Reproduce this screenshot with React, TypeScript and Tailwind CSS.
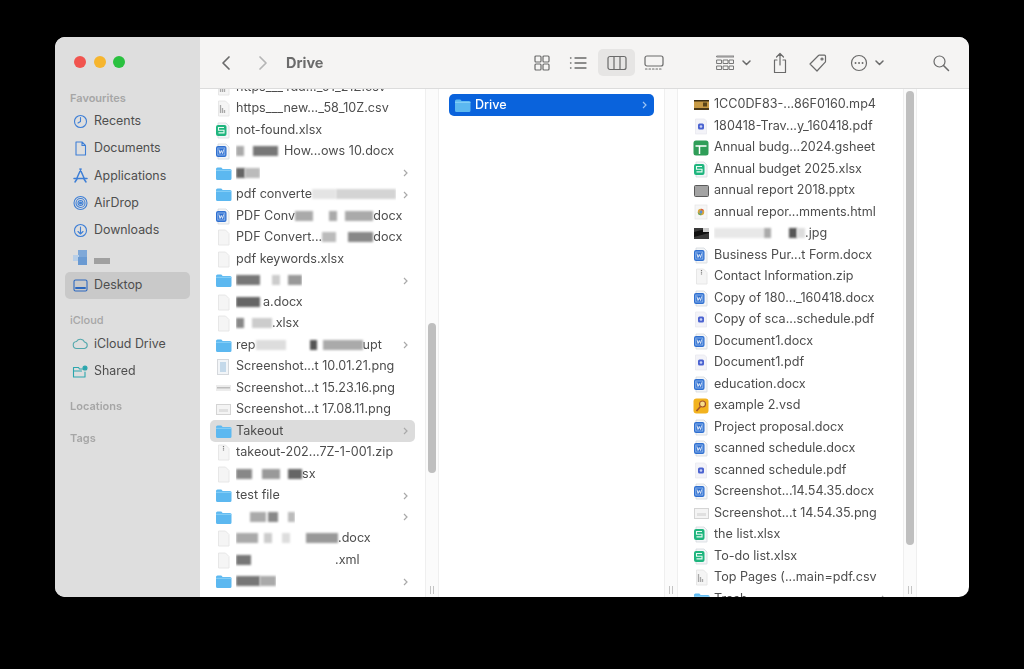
import type { ReactNode } from "react";

type IconKind =
  | "folder" | "word" | "excel" | "pdf" | "blank" | "csv" | "zip" | "gsheet" | "vsd"
  | "video" | "slides" | "html" | "photo" | "shotTall" | "shotWide" | "shotBox";

type Row = { icon: IconKind; name: ReactNode; chevron?: boolean; active?: boolean };

// redaction smudge in a file name
const B = ({ w, c = "#9a9a9a" }: { w: number; c?: string }) => (
  <span className="inline-block h-[10px] align-[-1px] blur-[1px]" style={{ width: w, background: c }} />
);
const G = ({ w }: { w: number }) => <span className="inline-block" style={{ width: w }} />;

const FileIcon = ({ kind }: { kind: IconKind }) => {
  if (kind === "folder")
    return (
      <svg width="17" height="15" viewBox="0 0 17 15">
        <path d="M1 3a1.500 1.500 0 0 1 1.500-1.500h3.800l1.400 1.400h7.300A1.500 1.500 0 0 1 16.500 4.400v8.100a1.500 1.500 0 0 1-1.500 1.500H2.500A1.500 1.500 0 0 1 1 12.500z" fill="#5cb8f0" />
        <path d="M1 4.300h15.500" stroke="#8ed2f8" strokeWidth="1" />
      </svg>
    );
  if (kind === "word")
    return (
      <svg width="16" height="17" viewBox="0 0 16 17">
        <path d="M3 1h8l3 3v11.500a.5.500 0 0 1-.5.500H3z" fill="#f4f6f8" stroke="#cfd4da" strokeWidth=".7" />
        <rect x="1" y="3" width="10.500" height="11" rx="2" fill="#2f6fd0" />
        <rect x="2.800" y="5" width="7" height="7" fill="none" stroke="#9cc0f0" strokeWidth=".8" />
        <path d="M4 6.500l1 4 1.300-3 1.300 3 1-4" fill="none" stroke="#fff" strokeWidth=".8" />
      </svg>
    );
  if (kind === "excel")
    return (
      <svg width="16" height="17" viewBox="0 0 16 17">
        <path d="M3 1h8l3 3v11.500a.5.500 0 0 1-.5.500H3z" fill="#f4f6f8" stroke="#cfd4da" strokeWidth=".7" />
        <rect x="1" y="3" width="10.500" height="11" rx="2" fill="#1fb57e" />
        <path d="M9 5.500H3.500v2.700H9v2.700H3.500" fill="none" stroke="#e8fbf3" strokeWidth="1.100" />
      </svg>
    );
  if (kind === "pdf")
    return (
      <svg width="16" height="17" viewBox="0 0 16 17">
        <path d="M2.500 1h9l2 2v13h-11z" fill="#f3f3f8" stroke="#e6e6ee" strokeWidth=".7" />
        <rect x="5" y="5.500" width="6" height="6" rx="1.500" fill="#4a62d0" />
        <circle cx="8" cy="8.500" r="1.300" fill="#c9d2f5" />
      </svg>
    );
  if (kind === "gsheet")
    return (
      <svg width="16" height="16" viewBox="0 0 16 16">
        <rect x="0.500" y="0.500" width="15" height="15" rx="2.500" fill="#2f9e58" />
        <path d="M2.500 6h11M6.500 6v8" stroke="#fff" strokeWidth="1.500" />
      </svg>
    );
  if (kind === "vsd")
    return (
      <svg width="16" height="16" viewBox="0 0 16 16">
        <rect x="0.500" y="0.500" width="15" height="15" rx="3" fill="#f2b21e" />
        <circle cx="9.500" cy="6" r="3" fill="#f7dd8a" stroke="#a0522d" strokeWidth="1.200" />
        <path d="M7.500 8.500l-4 4.500" stroke="#a0522d" strokeWidth="1.600" />
      </svg>
    );
  if (kind === "video")
    return (
      <svg width="15" height="10" viewBox="0 0 15 10">
        <rect width="15" height="10" fill="#c79a45" />
        <rect y="0" width="15" height="1.500" fill="#3a2c12" />
        <rect y="8" width="15" height="2" fill="#4a3817" />
        <rect x="9" y="2.500" width="4" height="4" fill="#5a4418" />
      </svg>
    );
  if (kind === "slides")
    return (
      <svg width="15" height="12" viewBox="0 0 15 12">
        <rect x=".5" y=".5" width="14" height="11" rx="1" fill="#a3a3a3" stroke="#5a5a5a" />
      </svg>
    );
  if (kind === "html")
    return (
      <svg width="14" height="16" viewBox="0 0 14 16">
        <rect x="1" y="1" width="12" height="14" fill="#f6f6f6" stroke="#e6e6e6" strokeWidth=".7" />
        <circle cx="7" cy="8" r="3.200" fill="#d8a53a" />
        <path d="M7 4.800a3.200 3.200 0 0 1 2.900 1.800H7z" fill="#d9534f" />
        <path d="M3.800 8a3.200 3.200 0 0 0 3.200 3.200l1-1.800H5z" fill="#5aa86a" />
        <circle cx="7" cy="8" r="1.400" fill="#5a8fd8" />
      </svg>
    );
  if (kind === "photo")
    return (
      <svg width="15" height="11" viewBox="0 0 15 11">
        <rect width="15" height="11" fill="#3a3a3a" />
        <path d="M0 4l15-4v5L0 9z" fill="#111" />
        <rect x="9" y="0" width="6" height="4" fill="#cfcfcf" />
      </svg>
    );
  if (kind === "shotTall")
    return (
      <svg width="14" height="16" viewBox="0 0 14 16">
        <rect x="1.500" y=".5" width="11" height="15" fill="#f2f5f8" stroke="#d5d8dc" />
        <rect x="4" y="3" width="6" height="10" fill="#c4d9ea" />
      </svg>
    );
  if (kind === "shotWide")
    return (
      <svg width="15" height="8" viewBox="0 0 15 8">
        <rect y="1" width="15" height="6" fill="#ececec" />
        <rect x="1" y="3" width="13" height="1.500" fill="#bdbdbd" />
      </svg>
    );
  if (kind === "shotBox")
    return (
      <svg width="15" height="11" viewBox="0 0 15 11">
        <rect x=".5" y=".5" width="14" height="10" fill="#f4f4f4" stroke="#d4d4d4" />
        <rect x="3" y="5" width="9" height="3" fill="#e0e0e0" />
      </svg>
    );
  // blank / csv / zip documents
  return (
    <svg width="13" height="17" viewBox="0 0 13 17">
      <path d="M1.500 1h7l3.500 3.500V16h-10.500z" fill="#f5f5f5" stroke="#e2e2e2" strokeWidth=".8" />
      {kind === "csv" && <path d="M3.500 5v8M5.500 8v5M7.500 10v3" stroke="#a8a8a8" strokeWidth="1.300" />}
      {kind === "zip" && <path d="M6.500 2v5" stroke="#777" strokeWidth="1.200" strokeDasharray="1 .8" />}
    </svg>
  );
};

const col1: Row[] = [
  { icon: "csv", name: "https___4dd..._01_21Z.csv" },
  { icon: "csv", name: "https___new..._58_10Z.csv" },
  { icon: "excel", name: "not-found.xlsx" },
  { icon: "word", name: <><B w={8} c="#aaa" /><G w={9} /><B w={25} c="#777" /><G w={6} />How...ows 10.docx</> },
  { icon: "folder", name: <><B w={9} c="#666" /><B w={15} c="#bbb" /></>, chevron: true },
  { icon: "folder", name: <>pdf converte<B w={24} c="#e4e4e4" /><B w={60} c="#d4d4d4" /></>, chevron: true },
  { icon: "word", name: <>PDF Conv<B w={18} c="#aaa" /><G w={16} /><B w={8} c="#aaa" /><G w={8} /><B w={28} c="#aaa" />docx</> },
  { icon: "blank", name: <>PDF Convert...<B w={14} c="#bbb" /><G w={12} /><B w={25} c="#888" />docx</> },
  { icon: "blank", name: "pdf keywords.xlsx" },
  { icon: "folder", name: <><B w={24} c="#777" /><G w={12} /><B w={8} c="#ccc" /><G w={8} /><B w={14} c="#999" /></>, chevron: true },
  { icon: "blank", name: <><B w={24} c="#666" /><G w={3} />a.docx</> },
  { icon: "blank", name: <><B w={8} c="#888" /><G w={8} /><B w={20} c="#ccc" />.xlsx</> },
  { icon: "folder", name: <>rep<B w={30} c="#ddd" /><G w={24} /><B w={7} c="#555" /><G w={6} /><B w={40} c="#aaa" />upt</>, chevron: true },
  { icon: "shotTall", name: "Screenshot...t 10.01.21.png" },
  { icon: "shotWide", name: "Screenshot...t 15.23.16.png" },
  { icon: "shotBox", name: "Screenshot...t 17.08.11.png" },
  { icon: "folder", name: "Takeout", chevron: true, active: true },
  { icon: "zip", name: "takeout-202...7Z-1-001.zip" },
  { icon: "blank", name: <><B w={16} c="#888" /><G w={10} /><B w={18} c="#999" /><G w={8} /><B w={14} c="#666" />sx</> },
  { icon: "folder", name: "test file", chevron: true },
  { icon: "folder", name: <><G w={14} /><B w={16} c="#aaa" /><G w={2} /><B w={10} c="#888" /><G w={10} /><B w={7} c="#bbb" /></>, chevron: true },
  { icon: "blank", name: <><B w={22} c="#aaa" /><G w={6} /><B w={8} c="#ccc" /><G w={10} /><B w={8} c="#ddd" /><G w={16} /><B w={32} c="#999" />.docx</> },
  { icon: "blank", name: <><B w={15} c="#777" /><G w={84} />.xml</> },
  { icon: "folder", name: <><B w={24} c="#777" /><B w={16} c="#aaa" /></>, chevron: true },
  { icon: "folder", name: "drafts", chevron: true },
];

const col3: Row[] = [
  { icon: "video", name: "1CC0DF83-...86F0160.mp4" },
  { icon: "pdf", name: "180418-Trav...y_160418.pdf" },
  { icon: "gsheet", name: "Annual budg...2024.gsheet" },
  { icon: "excel", name: "Annual budget 2025.xlsx" },
  { icon: "slides", name: "annual report 2018.pptx" },
  { icon: "html", name: "annual repor...mments.html" },
  { icon: "photo", name: <><B w={50} c="#e8e8e8" /><B w={7} c="#aaa" /><G w={18} /><B w={8} c="#555" /><B w={8} c="#ddd" />.jpg</> },
  { icon: "word", name: "Business Pur...t Form.docx" },
  { icon: "zip", name: "Contact Information.zip" },
  { icon: "word", name: "Copy of 180..._160418.docx" },
  { icon: "pdf", name: "Copy of sca...schedule.pdf" },
  { icon: "word", name: "Document1.docx" },
  { icon: "pdf", name: "Document1.pdf" },
  { icon: "word", name: "education.docx" },
  { icon: "vsd", name: "example 2.vsd" },
  { icon: "word", name: "Project proposal.docx" },
  { icon: "word", name: "scanned schedule.docx" },
  { icon: "pdf", name: "scanned schedule.pdf" },
  { icon: "word", name: "Screenshot...14.54.35.docx" },
  { icon: "shotBox", name: "Screenshot...t 14.54.35.png" },
  { icon: "excel", name: "the list.xlsx" },
  { icon: "excel", name: "To-do list.xlsx" },
  { icon: "csv", name: "Top Pages (...main=pdf.csv" },
  { icon: "folder", name: "Trash", chevron: true },
];

const Chevron = ({ color = "#a9a9a9" }: { color?: string }) => (
  <svg width="5" height="8" viewBox="0 0 5 8" fill="none" stroke={color} strokeWidth="1.200" className="ml-auto shrink-0">
    <path d="M1 1l3 3-3 3" />
  </svg>
);

const FileRow = ({ row }: { row: Row }) => (
  <div className={`flex h-[21.5px] items-center rounded-[5px] pr-[7px] ${row.active ? "bg-[#dcdcdc]" : ""}`}>
    <span className="flex w-[26px] shrink-0 justify-center">
      <FileIcon kind={row.icon} />
    </span>
    <span className="truncate">{row.name}</span>
    {row.chevron && <Chevron />}
  </div>
);

const Gutter = ({ thumbTop, thumbHeight }: { thumbTop?: string; thumbHeight?: string }) => (
  <div className="flex w-[14px] shrink-0 flex-col items-center border-x border-[#efefef] bg-[#fbfbfb]">
    {thumbTop && <div className={`w-2 rounded-full bg-[#bfbfbf] ${thumbTop} ${thumbHeight}`} />}
    <div className="mt-auto mb-[3px] flex gap-[2px]">
      <span className="h-[8px] w-px bg-[#c4c4c4]" />
      <span className="h-[8px] w-px bg-[#c4c4c4]" />
    </div>
  </div>
);

const sideItem = "flex h-[27.400px] items-center rounded-[5px] pl-[7px] text-[12.400px] text-[#4e4e4e]";

const SideIcon = ({ children, color = "#3e7fd6" }: { children: ReactNode; color?: string }) => (
  <svg width="17" height="17" viewBox="0 0 17 17" fill="none" stroke={color} strokeWidth="1.100" strokeLinecap="round" strokeLinejoin="round" className="mr-[5px] shrink-0">
    {children}
  </svg>
);

const Sidebar = () => (
  <aside className="flex w-[145px] shrink-0 flex-col bg-[#dedede] px-[10px] pt-[19px]">
    <div className="flex gap-[7.500px] pl-[9px]">
      <span className="h-[12px] w-[12px] rounded-full bg-[#f1544f]" />
      <span className="h-[12px] w-[12px] rounded-full bg-[#f6b52e]" />
      <span className="h-[12px] w-[12px] rounded-full bg-[#2ac13f]" />
    </div>
    <p className="mt-[22px] mb-[1px] pl-[5px] text-[11px] font-semibold text-[#a6a6a6]">Favourites</p>
    <div className={sideItem}>
      <SideIcon><circle cx="8.500" cy="8.500" r="6" /><path d="M8.500 4.500v4l-2.500 1.500" /></SideIcon>Recents
    </div>
    <div className={sideItem}>
      <SideIcon><path d="M4 2h6l3.500 3.500V15H4zM10 2v3.500h3.500" /></SideIcon>Documents
    </div>
    <div className={sideItem}>
      <SideIcon><path d="M9 2L4.500 12M8 2l4.500 10M2 11.500h13M3 15l2-3M14 15l-2-3" strokeWidth="1.500" /></SideIcon>Applications
    </div>
    <div className={sideItem}>
      <SideIcon><circle cx="8.500" cy="8" r="6.500" /><circle cx="8.500" cy="8" r="4.500" /><circle cx="8.500" cy="8" r="2.500" /><circle cx="8.500" cy="8" r="1" fill="#3e7fd6" /></SideIcon>AirDrop
    </div>
    <div className={sideItem}>
      <SideIcon><circle cx="8.500" cy="8.500" r="6" /><path d="M8.500 5v7M6 9.500l2.500 2.500L11 9.500" /></SideIcon>Downloads
    </div>
    <div className={sideItem}>
      <svg width="17" height="17" viewBox="0 0 17 17" className="mr-[5px] shrink-0 blur-[0.4px]">
        <rect x="6" y="0" width="9" height="8" fill="#7fa8d8" />
        <rect x="1" y="5" width="6" height="6" fill="#b8cfe8" />
        <rect x="6" y="7" width="9" height="8" fill="#6a9ad2" />
      </svg>
      <span className="mt-[5px] h-[6px] w-[16px] bg-[#a0a0a0] blur-[0.6px]" />
    </div>
    <div className={`${sideItem} bg-[#c9c9c9]`}>
      <SideIcon color="#2c68bf"><rect x="2" y="3" width="13" height="11" rx="1.500" /><path d="M4 11h9" strokeWidth="2" /></SideIcon>Desktop
    </div>
    <p className="mt-[13px] mb-[1.500px] pl-[5px] text-[11px] font-medium text-[#a6a6a6]">iCloud</p>
    <div className={sideItem}>
      <SideIcon color="#54a8ad"><path d="M5 13.500a3.500 3.500 0 0 1-.5-7A4.500 4.500 0 0 1 12.500 7a3.300 3.300 0 0 1 0 6.500z" /></SideIcon>iCloud Drive
    </div>
    <div className={sideItem}>
      <SideIcon color="#2aa6ad"><path d="M1.500 4.500h5l1 1.500h3M1.500 4.500V14h11.500V9M1.500 8h8" /><circle cx="13" cy="5" r="2" fill="#2aa6ad" /></SideIcon>Shared
    </div>
    <p className="mt-[13px] pl-[5px] text-[11px] font-semibold text-[#a6a6a6]">Locations</p>
    <p className="mt-[15px] pl-[5px] text-[11px] font-semibold text-[#a6a6a6]">Tags</p>
  </aside>
);

const ToolIcon = ({ w = 18, h = 18, children, className = "" }: { w?: number; h?: number; children: ReactNode; className?: string }) => (
  <svg width={w} height={h} viewBox={`0 0 ${w} ${h}`} fill="none" stroke="#6a6a6a" strokeWidth="1.200" strokeLinecap="round" strokeLinejoin="round" className={`shrink-0 ${className}`}>
    {children}
  </svg>
);

const MiniChevron = ({ className }: { className: string }) => (
  <ToolIcon w={9} h={6} className={className}><path d="M1 1l3.500 3.500L8 1" strokeWidth="1.500" /></ToolIcon>
);

const Toolbar = () => (
  <header className="flex h-[52px] shrink-0 items-center border-b border-[#dcdcdc] bg-[#f5f4f3] pl-[20px]">
    <ToolIcon w={12} h={18}><path d="M9 3L3 9l6 6" strokeWidth="1.700" /></ToolIcon>
    <ToolIcon w={12} h={18} className="ml-[25px]"><path d="M3 3l6 6-6 6" stroke="#b5b5b5" strokeWidth="1.700" /></ToolIcon>
    <h1 className="ml-[17px] text-[14.500px] font-bold text-[#6b6b6b]">Drive</h1>
    <div className="ml-[210px] flex items-center">
      <ToolIcon>
        <rect x="2" y="2" width="6" height="6" rx="1" /><rect x="10" y="2" width="6" height="6" rx="1" />
        <rect x="2" y="10" width="6" height="6" rx="1" /><rect x="10" y="10" width="6" height="6" rx="1" />
      </ToolIcon>
      <ToolIcon className="ml-[18px]">
        <path d="M6 4h11M6 9h11M6 14h11M1.500 4h.5M1.500 9h.5M1.500 14h.5" strokeWidth="1.300" />
      </ToolIcon>
      <div className="ml-[11px] flex h-[27px] w-[37px] items-center justify-center rounded-[5px] bg-[#e6e5e4]">
        <ToolIcon w={20} h={16}><rect x="1" y="1.500" width="18" height="13" rx="2" /><path d="M7 1.500v13M13 1.500v13" /></ToolIcon>
      </div>
      <ToolIcon w={20} h={18} className="ml-[9px]">
        <rect x="1" y="2" width="18" height="10" rx="2" /><path d="M1.500 15h17" strokeDasharray="1.500 2" />
      </ToolIcon>
    </div>
    <div className="ml-[52px] flex items-center">
      <ToolIcon w={18} h={18}>
        <rect x="1" y="2" width="17" height="1" strokeWidth=".8" />
        <rect x="1" y="6" width="4.500" height="3.500" strokeWidth=".9" /><rect x="7.500" y="6" width="4.500" height="3.500" strokeWidth=".9" /><rect x="13.500" y="6" width="4" height="3.500" strokeWidth=".9" />
        <rect x="1" y="12" width="4.500" height="3.500" strokeWidth=".9" /><rect x="7.500" y="12" width="4.500" height="3.500" strokeWidth=".9" /><rect x="13.500" y="12" width="4" height="3.500" strokeWidth=".9" />
      </ToolIcon>
      <MiniChevron className="ml-[8px]" />
      <ToolIcon w={16} h={22} className="ml-[21px]">
        <path d="M8 13V2M4.500 5L8 1.500 11.500 5M5 8H2.500v12.500h11V8H11" />
      </ToolIcon>
      <ToolIcon w={20} h={20} className="ml-[20px]">
        <path d="M2 11l8.500-8.500a1 1 0 0 1 .7-.3h5.300a1 1 0 0 1 1 1v5.300a1 1 0 0 1-.3.700L9 18z" /><circle cx="14" cy="6" r="1" />
      </ToolIcon>
      <ToolIcon w={18} h={18} className="ml-[22px]">
        <circle cx="9" cy="9" r="7.500" /><path d="M5.500 9h.1M9 9h.1M12.500 9h.1" strokeWidth="1.800" />
      </ToolIcon>
      <MiniChevron className="ml-[7px]" />
      <ToolIcon w={18} h={18} className="ml-[48px]">
        <circle cx="7.500" cy="7.500" r="5.500" /><path d="M11.500 11.500l5 5" strokeWidth="1.500" />
      </ToolIcon>
    </div>
  </header>
);

export default function App() {
  return (
    <div className="h-[669px] w-[1024px] overflow-hidden bg-black pt-[37px] pl-[55px] font-['Inter','Liberation_Sans',sans-serif] text-[12.600px] text-[#4d4d4d]">
      <div className="flex h-[560px] w-[914px] overflow-hidden rounded-[10px] bg-white blur-[0.3px]">
        <Sidebar />
        <main className="flex min-w-0 flex-1 flex-col">
          <Toolbar />
          <div className="flex min-h-0 flex-1">
            <div className="h-full w-[225px] shrink-0 overflow-hidden px-[10px]">
              <div className="-mt-[12.700px]">
                {col1.map((row, i) => <FileRow key={i} row={row} />)}
              </div>
            </div>
            <Gutter thumbTop="mt-[234px]" thumbHeight="h-[150px]" />
            <div className="h-full w-[225px] shrink-0 px-[10px] pt-[5px]">
              <div className="flex h-[22px] items-center rounded-[5px] bg-[#0a63dc] pr-[7px] font-medium text-white">
                <span className="flex w-[26px] shrink-0 justify-center"><FileIcon kind="folder" /></span>
                Drive
                <Chevron color="#9cc4f4" />
              </div>
            </div>
            <Gutter />
            <div className="h-full w-[225px] shrink-0 overflow-hidden px-[10px] pt-[5px]">
              {col3.map((row, i) => <FileRow key={i} row={row} />)}
            </div>
            <Gutter thumbTop="mt-[2px]" thumbHeight="h-[454px]" />
          </div>
        </main>
      </div>
    </div>
  );
}
